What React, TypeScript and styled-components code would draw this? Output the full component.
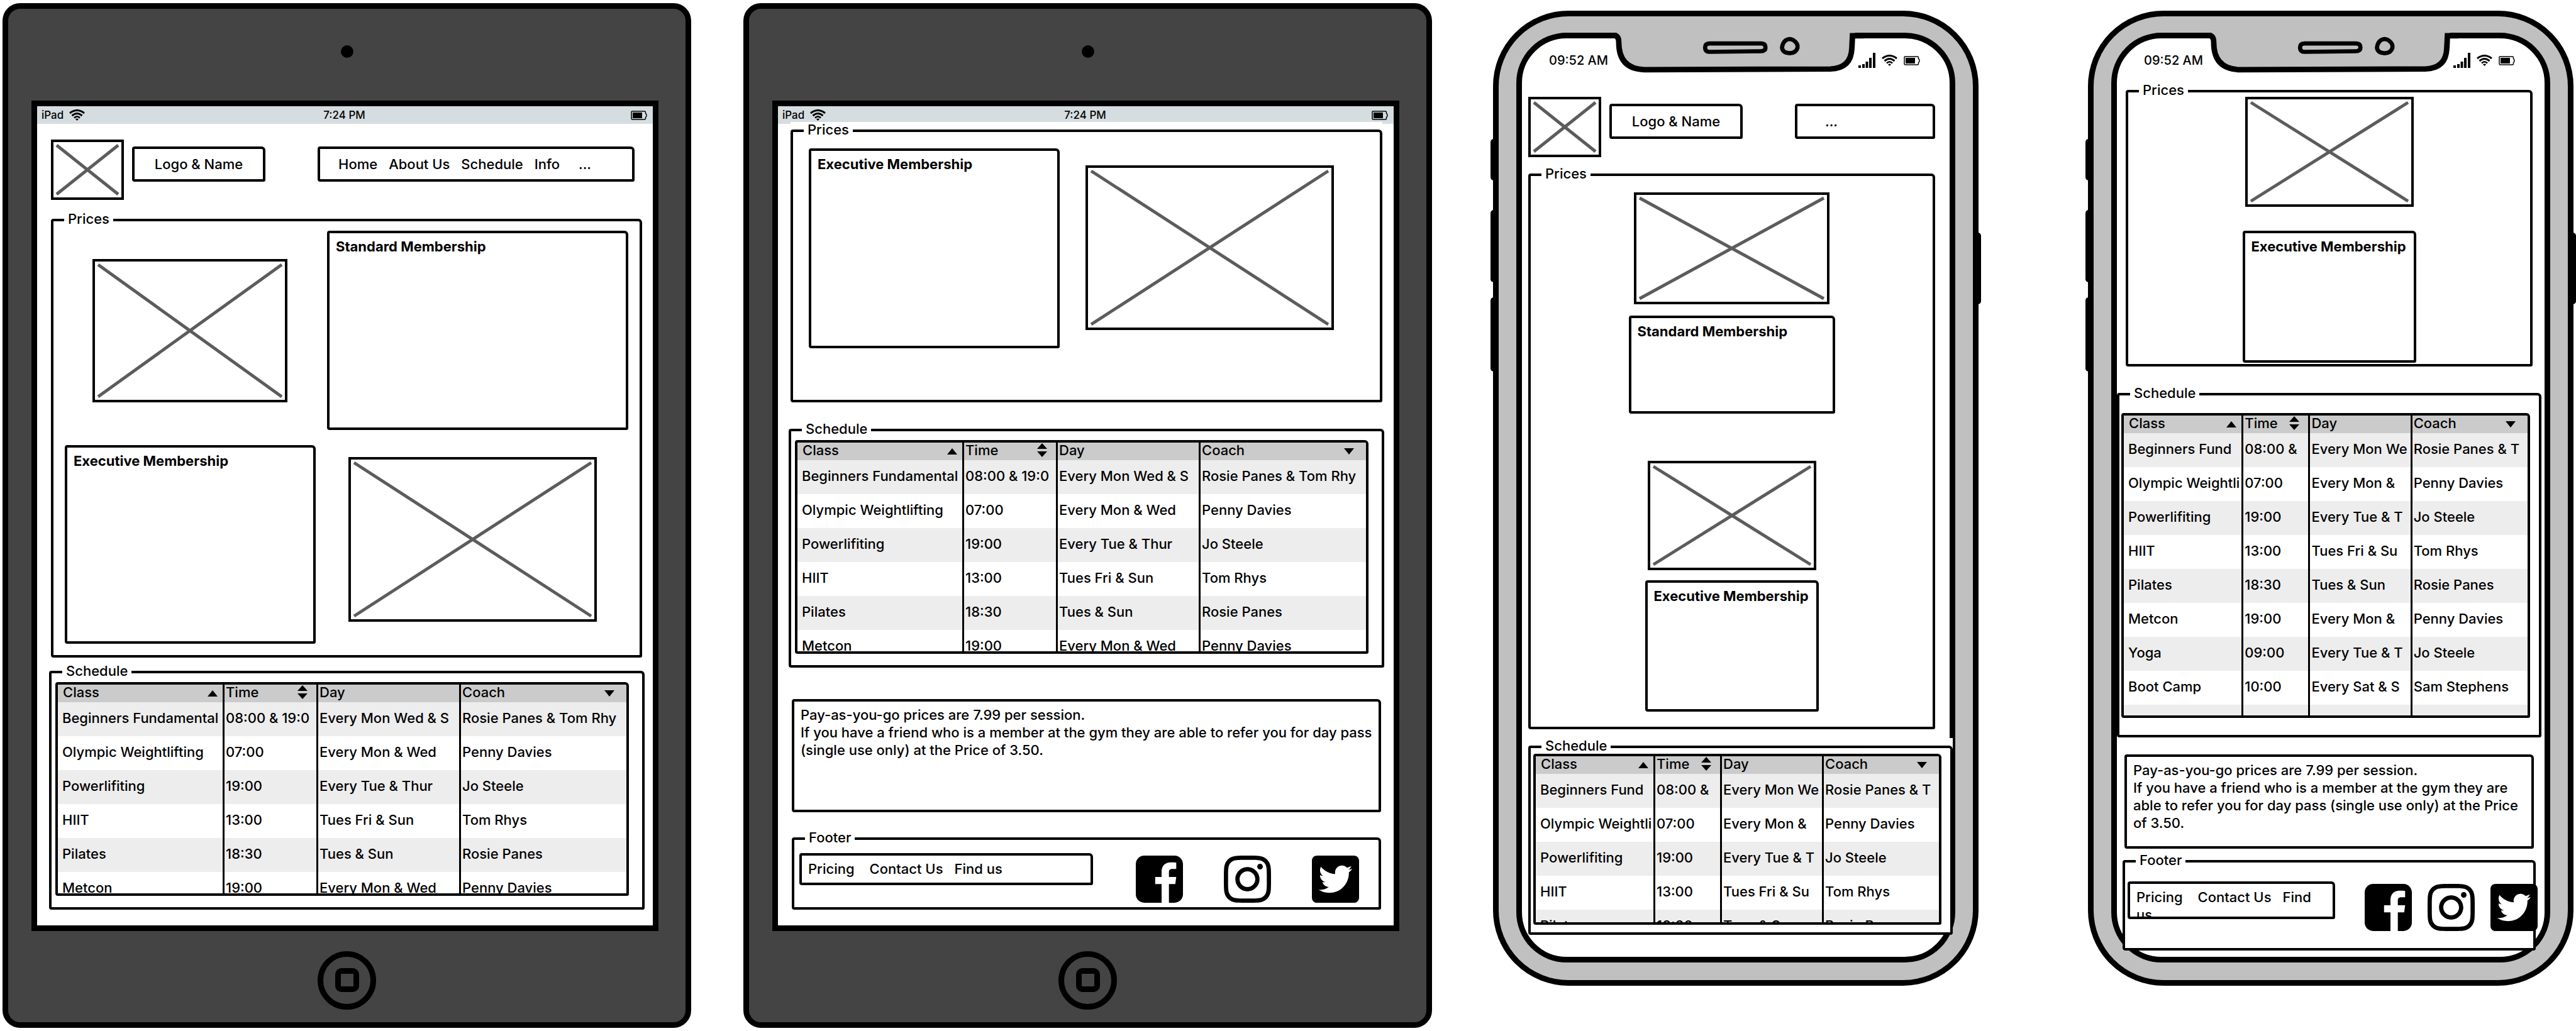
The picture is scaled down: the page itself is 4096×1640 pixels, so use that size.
import React from "react";
import styled, { createGlobalStyle } from "styled-components";
import { FaInstagram, FaTwitterSquare } from "react-icons/fa";

const INK = "#000";
const CROSS = "#5c5c5c";

const GlobalStyle = createGlobalStyle`
  *, *::before, *::after { box-sizing: border-box; }
  body {
    margin: 0;
    background: #fff;
    color: ${INK};
    font: 500 22px/28px Inter, "Open Sans", sans-serif;
  }
`;

/* ---------- page ---------- */

const Board = styled.main`
  display: flex;
  align-items: flex-start;
  gap: 97px;
  padding: 5px 4px;
`;

const Tablets = styled.div`
  flex: 2273 1 0;
  display: flex;
  gap: 83px;
`;

const Phones = styled.div`
  flex: 1718 1 0;
  display: flex;
  gap: 174px;
  padding-top: 12px;
`;

/* ---------- tablet frame ---------- */

const TabletBody = styled.article`
  flex: 1 1 0;
  min-width: 0;
  display: flex;
  flex-direction: column;
  background: #444;
  border: 9px solid ${INK};
  border-radius: 28px;
`;

const Forehead = styled.div`
  display: flex;
  align-items: center;
  justify-content: center;
  height: 146px;
  padding-bottom: 10px;
`;

const Camera = styled.span`
  width: 20px;
  height: 20px;
  border-radius: 50%;
  background: ${INK};
`;

const Chin = styled.div`
  display: flex;
  align-items: center;
  justify-content: center;
  height: 145px;
  padding-top: 11px;
`;

const HomeButton = styled.button`
  display: grid;
  place-items: center;
  width: 93px;
  height: 93px;
  padding: 0;
  background: transparent;
  border: 9px solid ${INK};
  border-radius: 50%;
`;

const HomeSquare = styled.span`
  width: 38px;
  height: 38px;
  border: 9px solid ${INK};
  border-radius: 10px;
`;

const TabletScreen = styled.div`
  height: 1321px;
  margin: 0 43px 0 37px;
  background: #fff;
  border: 9px solid ${INK};
`;

const TabletStatus = styled.div`
  display: grid;
  grid-template-columns: 1fr auto 1fr;
  align-items: center;
  height: 28px;
  padding: 0 9px 0 7px;
  background: #d6dde1;
  font-size: 17px;
`;

const Carrier = styled.span`
  display: flex;
  align-items: center;
  gap: 9px;
`;

const StatusRight = styled.span`
  display: flex;
  align-items: center;
  justify-content: flex-end;
  gap: 10px;
`;

/* ---------- phone frame ---------- */

const PhoneBody = styled.article`
  position: relative;
  flex: 1 1 0;
  min-width: 0;
  padding: 26px 28px 28px;
  background: #c0c0c0;
  border: 9px solid ${INK};
  border-radius: 120px;
`;

const SideKey = styled.span<{ $side: "left" | "right"; $top: number; $h: number }>`
  position: absolute;
  ${(p) => p.$side}: -13px;
  top: ${(p) => p.$top}px;
  width: 12px;
  height: ${(p) => p.$h}px;
  border-radius: 5px;
  background: ${INK};
`;

const Notch = styled.svg`
  position: absolute;
  top: 20px;
  left: 50%;
  width: 406px;
  height: 72px;
  transform: translateX(-50%);
`;

const PhoneScreen = styled.div`
  height: 1479px;
  background: #fff;
  border: 9px solid ${INK};
  border-radius: 80px;
`;

const PhoneStatus = styled.div`
  display: flex;
  align-items: center;
  justify-content: space-between;
  height: 70px;
  padding: 0 47px 0 43px;
  font-size: 20px;
`;

/* ---------- wireframe parts ---------- */

const sketchEdge = `
  border: 4px solid ${INK};
  border-radius: 4px 6px 3px 4px;
`;

const Picture = styled.svg<{ $h: number; $w?: number; $drop?: number }>`
  display: block;
  width: ${(p) => (p.$w ? `${p.$w}px` : "100%")};
  height: ${(p) => p.$h}px;
  margin-top: ${(p) => p.$drop ?? 0}px;
  padding: 5px;
  border: 4px solid ${INK};
  stroke: ${CROSS};
  stroke-width: 5px;
`;

const HeaderBar = styled.header<{ $cols: string; $top: number; $left: number; $right: number }>`
  display: grid;
  grid-template-columns: ${(p) => p.$cols};
  align-items: start;
  gap: 13px;
  margin: ${(p) => `${p.$top}px ${p.$right}px 0 ${p.$left}px`};
`;

const BrandBox = styled.div`
  display: flex;
  align-items: center;
  justify-content: center;
  height: 56px;
  margin-top: 11px;
  ${sketchEdge}
`;

const NavBox = styled.nav<{ $indent: number }>`
  display: flex;
  align-items: center;
  gap: 18px;
  height: 56px;
  margin: 11px 0 0 70px;
  padding-left: ${(p) => p.$indent}px;
  ${sketchEdge}

  a:nth-child(5) {
    margin-left: 12px;
  }
`;

const Link = styled.a`
  color: inherit;
  text-decoration: none;
`;

const Section = styled.section<{ $top: number; $left: number; $right: number }>`
  position: relative;
  margin: ${(p) => `${p.$top}px ${p.$right}px 0 ${p.$left}px`};
  background: #fff;
`;

const GroupFrame = styled.fieldset`
  min-width: 0;
  margin: 0;
  padding: 0;
  ${sketchEdge}
`;

const GroupTitle = styled.legend`
  margin-left: 17px;
  padding: 0 6px 4px;
  line-height: 24px;
`;

const GroupBody = styled.div<{ $pad: string }>`
  padding: ${(p) => p.$pad};
`;

const PriceRow = styled.div<{ $cols: string; $gap: number; $pad: string }>`
  display: grid;
  grid-template-columns: ${(p) => p.$cols};
  align-items: start;
  column-gap: ${(p) => p.$gap}px;
  padding: ${(p) => p.$pad};
`;

const PriceStack = styled.div<{ $lift?: number }>`
  display: flex;
  flex-direction: column;
  align-items: center;
  margin-top: ${(p) => -(p.$lift ?? 0)}px;
`;

const Plan = styled.div<{ $h: number; $w?: number; $drop?: number }>`
  width: ${(p) => (p.$w ? `${p.$w}px` : "auto")};
  height: ${(p) => p.$h}px;
  margin-top: ${(p) => p.$drop ?? 0}px;
  padding: 7px 10px;
  font-weight: 700;
  white-space: nowrap;
  ${sketchEdge}
`;

const Note = styled.p<{ $top: number; $left: number; $right: number; $h: number }>`
  height: ${(p) => p.$h}px;
  margin: ${(p) => `${p.$top}px ${p.$right}px 0 ${p.$left}px`};
  padding: 7px 10px;
  white-space: pre-line;
  ${sketchEdge}
`;

const FooterBar = styled.footer<{ $gap: number; $bleed: number }>`
  display: flex;
  align-items: flex-start;
  gap: ${(p) => p.$gap}px;
  margin-right: ${(p) => -p.$bleed}px;
`;

const FooterLinks = styled.nav<{ $h: number }>`
  flex: 1 1 0;
  height: ${(p) => p.$h}px;
  padding: 7px 10px;
  overflow: hidden;
  ${sketchEdge}

  a:nth-child(1) {
    margin-right: 24px;
  }
  a:nth-child(2) {
    margin-right: 18px;
  }
`;

const Social = styled.div<{ $gap: number }>`
  display: flex;
  gap: ${(p) => p.$gap}px;
  padding-top: 4px;
`;

const SocialLink = styled.a`
  display: block;
  width: 75px;
  height: 75px;
  color: ${INK};

  svg {
    display: block;
    width: 100%;
    height: 100%;
  }
`;

/* ---------- schedule table ---------- */

const TableFrame = styled.div<{ $h: number; $lift?: number }>`
  height: ${(p) => p.$h}px;
  margin-top: ${(p) => -(p.$lift ?? 0)}px;
  overflow: hidden;
  ${sketchEdge}
`;

const Table = styled.table`
  width: 100%;
  table-layout: fixed;
  border-collapse: separate;
  border-spacing: 0;
`;

const HeadCell = styled.th`
  height: 28px;
  padding: 0 0 0 2px;
  background: #cbcbcb;
  border-right: 3px solid ${INK};
  font-weight: 500;
  text-align: left;

  &:first-child {
    padding-left: 8px;
  }
  &:last-child {
    border-right: 0;
  }
`;

const HeadInner = styled.div<{ $end: number }>`
  display: flex;
  align-items: center;
  justify-content: space-between;
  height: 28px;
  padding: 0 ${(p) => p.$end}px 4px 0;
`;

const BodyRow = styled.tr`
  &:nth-child(odd) {
    background: #ededed;
  }
`;

const Cell = styled.td`
  height: 54px;
  padding: 0 0 4px 2px;
  border-right: 3px solid ${INK};
  white-space: nowrap;

  &:first-child {
    padding-left: 7px;
  }
  &:last-child {
    border-right: 0;
  }
`;

/* ---------- drawings ---------- */

type PicProps = { h: number; w?: number; drop?: number };

const CrossedPicture = ({ h, w, drop }: PicProps) => (
  <Picture $h={h} $w={w} $drop={drop} viewBox="0 0 100 100" preserveAspectRatio="none" overflow="visible">
    <path d="M0 0 L100 100 M100 0 L0 100" vectorEffect="non-scaling-stroke" />
  </Picture>
);

const Wifi = () => (
  <svg width="25" height="18" viewBox="0 0 50 36" fill="none" stroke={INK} strokeWidth="6">
    <path d="M2 12 Q25 -6 48 12" />
    <path d="M9 20 Q25 6 41 20" />
    <path d="M16 27 Q25 18 34 27" strokeWidth="5" />
    <path d="M20 31 Q25 27 30 31 L25 36 Z" fill={INK} stroke="none" />
  </svg>
);

const Battery = () => (
  <svg width="26" height="15" viewBox="0 0 52 30" fill="none" stroke={INK} strokeWidth="3">
    <path d="M3 2 H44 Q47 2 47 6 V9 Q50 10 50 15 Q50 20 47 21 V24 Q47 28 44 28 H5 Q2 28 2 25 V4 Q2 2 4 2 Z" />
    <rect x="6" y="6" width="30" height="18" fill={INK} stroke="none" />
  </svg>
);

const Signal = () => (
  <svg width="27" height="24" viewBox="0 0 54 48" fill={INK}>
    <rect x="0" y="40" width="8" height="8" />
    <rect x="12" y="36" width="8" height="12" />
    <rect x="23" y="28" width="8" height="20" />
    <rect x="34" y="16" width="8" height="32" />
    <rect x="46" y="0" width="8" height="48" />
  </svg>
);

const SortUp = () => (
  <svg width="16" height="22" viewBox="0 0 16 22">
    <path d="M8 8 L16 18 H0 Z" />
  </svg>
);

const SortDown = () => (
  <svg width="16" height="22" viewBox="0 0 16 22">
    <path d="M0 8 H16 L8 18 Z" />
  </svg>
);

const SortBoth = () => (
  <svg width="16" height="22" viewBox="0 0 16 22">
    <path d="M8 0 L16 9 H0 Z M0 13 H16 L8 22 Z" />
  </svg>
);

const FacebookMark = () => (
  <svg viewBox="0 32 448 448" fill="currentColor">
    <path d="M448 112v288c0 44-36 80-80 80h-53.300V302.800h60.600l8.700-67.600h-69.300V192c0-19.600 5.400-32.900 33.500-32.900H384V98.700c-6.200-.8-27.400-2.700-52.200-2.700-51.600 0-87 31.500-87 89.400v49.900H184v67.600h60.900V480H80c-44 0-80-36-80-80V112c0-44 36-80 80-80h288c44 0 80 36 80 80z" />
  </svg>
);

/* ---------- content ---------- */

type RowData = [string, string, string, string];

const tabletRows: RowData[] = [
  ["Beginners Fundamental", "08:00 & 19:0", "Every Mon Wed & S", "Rosie Panes & Tom Rhy"],
  ["Olympic Weightlifting", "07:00", "Every Mon & Wed", "Penny Davies"],
  ["Powerlifiting", "19:00", "Every Tue & Thur", "Jo Steele"],
  ["HIIT", "13:00", "Tues Fri & Sun", "Tom Rhys"],
  ["Pilates", "18:30", "Tues & Sun", "Rosie Panes"],
  ["Metcon", "19:00", "Every Mon & Wed", "Penny Davies"],
];

const phoneRows: RowData[] = [
  ["Beginners Fund", "08:00 &", "Every Mon We", "Rosie Panes & T"],
  ["Olympic Weightli", "07:00", "Every Mon &", "Penny Davies"],
  ["Powerlifiting", "19:00", "Every Tue & T", "Jo Steele"],
  ["HIIT", "13:00", "Tues Fri & Su", "Tom Rhys"],
  ["Pilates", "18:30", "Tues & Sun", "Rosie Panes"],
  ["Metcon", "19:00", "Every Mon &", "Penny Davies"],
  ["Yoga", "09:00", "Every Tue & T", "Jo Steele"],
  ["Boot Camp", "10:00", "Every Sat & S", "Sam Stephens"],
  ["", "", "", ""],
];

const tabletCols = [265, 149, 227, 263];
const phoneCols = [190, 106, 162, 183];

const Schedule = ({ rows, cols, h, lift }: { rows: RowData[]; cols: number[]; h: number; lift?: number }) => (
  <TableFrame $h={h} $lift={lift}>
    <Table>
      <colgroup>
        {cols.map((w, i) => (
          <col key={i} width={w} />
        ))}
      </colgroup>
      <thead>
        <tr>
          <HeadCell scope="col"><HeadInner $end={8}>Class<SortUp /></HeadInner></HeadCell>
          <HeadCell scope="col"><HeadInner $end={14}>Time<SortBoth /></HeadInner></HeadCell>
          <HeadCell scope="col"><HeadInner $end={0}>Day</HeadInner></HeadCell>
          <HeadCell scope="col"><HeadInner $end={19}>Coach<SortDown /></HeadInner></HeadCell>
        </tr>
      </thead>
      <tbody>
        {rows.map((row, i) => (
          <BodyRow key={i}>
            {row.map((text, j) => (
              <Cell key={j}>{text}</Cell>
            ))}
          </BodyRow>
        ))}
      </tbody>
    </Table>
  </TableFrame>
);

const priceNote =
  "Pay-as-you-go prices are 7.99 per session.\nIf you have a friend who is a member at the gym they are able to refer you for day pass (single use only) at the Price of 3.50.";

type FooterProps = { h: number; gap: number; iconGap: number; bleed?: number };

const FooterContent = ({ h, gap, iconGap, bleed = 0 }: FooterProps) => (
  <FooterBar $gap={gap} $bleed={bleed}>
    <FooterLinks $h={h}>
      <Link href="#pricing">Pricing</Link>
      <Link href="#contact">Contact Us</Link>
      <Link href="#find">Find us</Link>
    </FooterLinks>
    <Social $gap={iconGap}>
      <SocialLink href="#facebook" aria-label="Facebook"><FacebookMark /></SocialLink>
      <SocialLink href="#instagram" aria-label="Instagram"><FaInstagram viewBox="0 32 448 448" /></SocialLink>
      <SocialLink href="#twitter" aria-label="Twitter"><FaTwitterSquare viewBox="0 32 448 448" /></SocialLink>
    </Social>
  </FooterBar>
);

const Group = ({ title, pad, children }: { title: string; pad: string; children: React.ReactNode }) => (
  <GroupFrame>
    <GroupTitle>{title}</GroupTitle>
    <GroupBody $pad={pad}>{children}</GroupBody>
  </GroupFrame>
);

const Tablet = ({ children }: { children: React.ReactNode }) => (
  <TabletBody>
    <Forehead><Camera /></Forehead>
    <TabletScreen>
      <TabletStatus>
        <Carrier>iPad<Wifi /></Carrier>
        <span>7:24 PM</span>
        <StatusRight><Battery /></StatusRight>
      </TabletStatus>
      {children}
    </TabletScreen>
    <Chin>
      <HomeButton aria-label="Home"><HomeSquare /></HomeButton>
    </Chin>
  </TabletBody>
);

const Phone = ({ children }: { children: React.ReactNode }) => (
  <PhoneBody>
    <SideKey $side="left" $top={195} $h={66} />
    <SideKey $side="left" $top={308} $h={115} />
    <SideKey $side="left" $top={447} $h={118} />
    <SideKey $side="right" $top={344} $h={114} />
    <PhoneScreen>
      <PhoneStatus>
        <span>09:52 AM</span>
        <StatusRight><Signal /><Wifi /><Battery /></StatusRight>
      </PhoneStatus>
      {children}
    </PhoneScreen>
    <Notch viewBox="378 90 790 140" fill="none" stroke={INK} strokeWidth="17">
      <path d="M403 97 H1142 V150 Q1130 214 1065 214 H490 Q412 214 411 132 Z" fill="#c0c0c0" stroke="none" />
      <path d="M378 110 H396 Q411 110 411 132 Q411 214 490 216 L1065 214 Q1130 212 1132 150 L1134 111 H1168" />
      <path d="M692 135 H852 Q865 135 865 148 Q865 159 850 159 L692 161 Q678 161 678 148 Q678 135 692 135 Z" strokeWidth="13" />
      <path d="M928 125 Q938 118 950 124 Q966 134 964 148 Q960 164 940 165 Q918 164 916 148 Q918 132 928 125 Z" strokeWidth="13" />
    </Notch>
  </PhoneBody>
);

export default function App() {
  return (
    <>
      <GlobalStyle />
      <Board>
        <Tablets>
          <Tablet>
            <HeaderBar $cols="116fr 212fr 574fr" $top={25} $left={22} $right={29}>
              <CrossedPicture h={96} />
              <BrandBox>Logo &amp; Name</BrandBox>
              <NavBox $indent={29}>
                <Link href="#home">Home</Link>
                <Link href="#about">About Us</Link>
                <Link href="#schedule">Schedule</Link>
                <Link href="#info">Info</Link>
                <Link href="#more">...</Link>
              </NavBox>
            </HeaderBar>
            <Section $top={18} $left={22} $right={17}>
              <Group title="Prices" pad="3px 0 18px">
                <PriceRow $cols="310fr 479fr" $gap={63} $pad="0 18px 0 62px">
                  <CrossedPicture h={228} drop={45} />
                  <Plan $h={317}>Standard Membership</Plan>
                </PriceRow>
                <PriceRow $cols="399fr 395fr" $gap={52} $pad="24px 68px 0 18px">
                  <Plan $h={316}>Executive Membership</Plan>
                  <CrossedPicture h={262} drop={19} />
                </PriceRow>
              </Group>
            </Section>
            <Section $top={9} $left={19} $right={13}>
              <Group title="Schedule" pad="2px 21px 18px 6px">
                <Schedule rows={tabletRows} cols={tabletCols} h={340} />
              </Group>
            </Section>
          </Tablet>

          <Tablet>
            <Section $top={-3} $left={20} $right={18}>
              <Group title="Prices" pad="14px 0 82px">
                <PriceRow $cols="399fr 395fr" $gap={41} $pad="0 73px 0 25px">
                  <Plan $h={318}>Executive Membership</Plan>
                  <CrossedPicture h={262} drop={27} />
                </PriceRow>
              </Group>
            </Section>
            <Section $top={30} $left={17} $right={15}>
              <Group title="Schedule" pad="2px 21px 18px 6px">
                <Schedule rows={tabletRows} cols={tabletCols} h={340} />
              </Group>
            </Section>
            <Note $top={50} $left={22} $right={20} $h={180}>{priceNote}</Note>
            <Section $top={28} $left={22} $right={20}>
              <Group title="Footer" pad="9px 31px 7px 8px">
                <FooterContent h={51} gap={68} iconGap={65} />
              </Group>
            </Section>
          </Tablet>
        </Tablets>

        <Phones>
          <Phone>
            <HeaderBar $cols="116fr 212fr 293fr" $top={23} $left={10} $right={23}>
              <CrossedPicture h={96} />
              <BrandBox>Logo &amp; Name</BrandBox>
              <NavBox $indent={44}>
                <Link href="#more">...</Link>
              </NavBox>
            </HeaderBar>
            <Section $top={14} $left={10} $right={23}>
              <Group title="Prices" pad="14px 0 24px">
                <PriceStack>
                  <CrossedPicture w={311} h={178} />
                  <Plan $w={328} $h={156} $drop={18}>Standard Membership</Plan>
                  <CrossedPicture w={268} h={174} drop={75} />
                  <Plan $w={276} $h={209} $drop={16}>Executive Membership</Plan>
                </PriceStack>
              </Group>
            </Section>
            <Section $top={14} $left={10} $right={-5}>
              <Group title="Schedule" pad="0 14px 12px 4px">
                <Schedule rows={phoneRows.slice(0, 5)} cols={phoneCols} h={272} lift={3} />
              </Group>
            </Section>
          </Phone>

          <Phone>
            <Section $top={0} $left={14} $right={19}>
              <Group title="Prices" pad="0 0 2px">
                <PriceStack $lift={5}>
                  <CrossedPicture w={268} h={175} />
                  <Plan $w={276} $h={210} $drop={38}>Executive Membership</Plan>
                </PriceStack>
              </Group>
            </Section>
            <Section $top={30} $left={0} $right={5}>
              <Group title="Schedule" pad="16px 14px 27px 3px">
                <Schedule rows={phoneRows} cols={phoneCols} h={485} />
              </Group>
            </Section>
            <Note $top={27} $left={12} $right={17} $h={150}>{priceNote}</Note>
            <Section $top={6} $left={9} $right={14}>
              <Group title="Footer" pad="18px 0 27px 4px">
                <FooterContent h={60} gap={47} iconGap={25} bleed={7} />
              </Group>
            </Section>
          </Phone>
        </Phones>
      </Board>
    </>
  );
}
